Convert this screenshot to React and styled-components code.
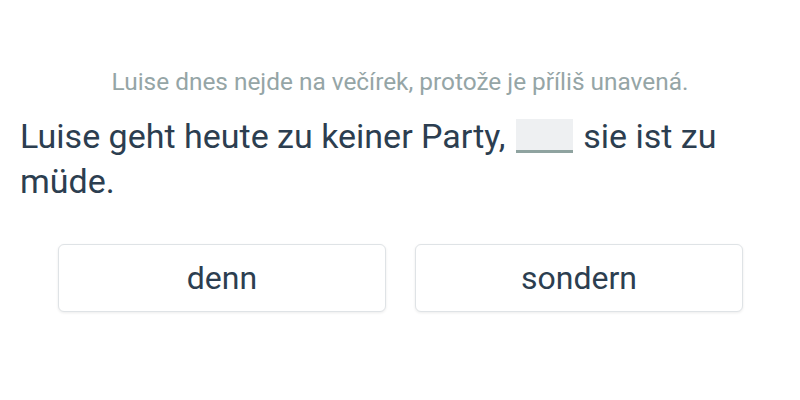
import React from "react"
import styled, { createGlobalStyle } from "styled-components"

const GlobalStyle = createGlobalStyle`
  body {
    margin: 0;
    background: #ffffff;
    font-family: Roboto, "Noto Sans", sans-serif;
  }
`

const Exercise = styled.div`
  width: 800px;
  height: 400px;
  box-sizing: border-box;
  padding: 64px 20px 0;
`

const Translation = styled.p`
  margin: 0 0 14px;
  text-align: center;
  font-size: 24.4px;
  line-height: 36px;
  color: #95a5a6;
`

const Sentence = styled.p`
  margin: 0;
  font-size: 34px;
  line-height: 45px;
  color: #2c3e50;
`

const Gap = styled.span`
  display: inline-block;
  width: 57px;
  height: 34px;
  margin: 0 2px;
  vertical-align: -5px;
  background: #eef0f2;
  border-bottom: 3px solid #8fa3a0;
  box-sizing: border-box;
`

const Options = styled.div`
  display: grid;
  grid-template-columns: 1fr 1fr;
  gap: 29px;
  padding: 0 37px 0 38px;
  margin-top: 40px;
`

const Option = styled.button`
  height: 68px;
  border: 1px solid #dfe3e6;
  border-radius: 6px;
  background: #ffffff;
  box-shadow: 0 1px 3px rgba(0, 0, 0, 0.08);
  font-family: Roboto, "Noto Sans", sans-serif;
  font-size: 32px;
  color: #2c3e50;
  cursor: pointer;
`

const options = ["denn", "sondern"]

export default function App() {
  return (
    <>
      <GlobalStyle />
      <Exercise>
        <Translation>Luise dnes nejde na večírek, protože je příliš unavená.</Translation>
        <Sentence>
          Luise geht heute zu keiner Party, <Gap /> sie ist zu müde.
        </Sentence>
        <Options>
          {options.map((o) => (
            <Option key={o}>{o}</Option>
          ))}
        </Options>
      </Exercise>
    </>
  )
}
